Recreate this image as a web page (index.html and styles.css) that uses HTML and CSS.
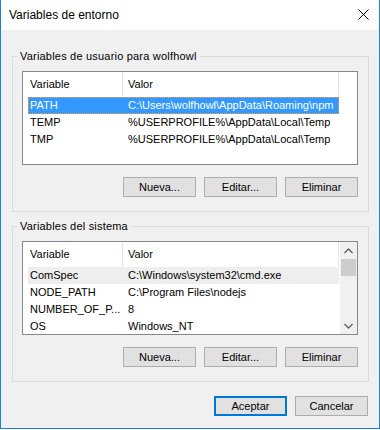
FILE: index.html
```html
<!DOCTYPE html>
<html>
<head>
    <title>Variables de entorno</title>
    <link rel="stylesheet" href="styles.css">
</head>
<body>
    <div class="window">
        <div class="titlebar">
            <span class="title">Variables de entorno</span>
            <svg class="close" width="11" height="11" viewBox="0 0 11 11">
                <path d="M0.5 0.5L10.5 10.5M10.5 0.5L0.5 10.5" stroke="#000" stroke-width="1" fill="none"/>
            </svg>
        </div>

        <div class="content">
            <fieldset class="group">
                <legend>Variables de usuario para wolfhowl</legend>
                <div class="list">
                    <div class="list-body">
                        <div class="list-head">
                            <div class="head-name">Variable</div>
                            <div class="head-value">Valor</div>
                        </div>
                        <div class="row selected">
                            <div class="cell-name">PATH</div>
                            <div class="cell-value">C:\Users\wolfhowl\AppData\Roaming\npm</div>
                        </div>
                        <div class="row">
                            <div class="cell-name">TEMP</div>
                            <div class="cell-value">%USERPROFILE%\AppData\Local\Temp</div>
                        </div>
                        <div class="row">
                            <div class="cell-name">TMP</div>
                            <div class="cell-value">%USERPROFILE%\AppData\Local\Temp</div>
                        </div>
                    </div>
                </div>
                <div class="actions">
                    <button class="btn">Nueva...</button>
                    <button class="btn">Editar...</button>
                    <button class="btn">Eliminar</button>
                </div>
            </fieldset>

            <fieldset class="group system">
                <legend>Variables del sistema</legend>
                <div class="list">
                    <div class="list-body">
                        <div class="list-head">
                            <div class="head-name">Variable</div>
                            <div class="head-value">Valor</div>
                        </div>
                        <div class="row inactive">
                            <div class="cell-name">ComSpec</div>
                            <div class="cell-value">C:\Windows\system32\cmd.exe</div>
                        </div>
                        <div class="row">
                            <div class="cell-name">NODE_PATH</div>
                            <div class="cell-value">C:\Program Files\nodejs</div>
                        </div>
                        <div class="row">
                            <div class="cell-name">NUMBER_OF_P...</div>
                            <div class="cell-value">8</div>
                        </div>
                        <div class="row">
                            <div class="cell-name">OS</div>
                            <div class="cell-value">Windows_NT</div>
                        </div>
                    </div>
                    <div class="scrollbar">
                        <div class="arrow">
                            <svg width="9" height="6" viewBox="0 0 9 6"><path d="M0.5 5L4.5 1L8.5 5" stroke="#606060" stroke-width="1.3" fill="none"/></svg>
                        </div>
                        <div class="track">
                            <div class="thumb"></div>
                        </div>
                        <div class="arrow">
                            <svg width="9" height="6" viewBox="0 0 9 6"><path d="M0.5 1L4.5 5L8.5 1" stroke="#606060" stroke-width="1.3" fill="none"/></svg>
                        </div>
                    </div>
                </div>
                <div class="actions">
                    <button class="btn">Nueva...</button>
                    <button class="btn">Editar...</button>
                    <button class="btn">Eliminar</button>
                </div>
            </fieldset>

            <div class="dialog-actions">
                <button class="btn btn-default">Aceptar</button>
                <button class="btn">Cancelar</button>
            </div>
        </div>
    </div>
</body>
</html>
```

FILE: styles.css
```css
* {
    box-sizing: border-box;
}

body {
    margin: 0;
    background-color: #ffffff;
    font-family: "Liberation Sans", Arial, sans-serif;
    font-size: 11px;
    color: #000000;
}

.window {
    width: 380px;
    height: 429px;
    border: 1px solid #1883d7;
    border-top: none;
    background-color: #f0f0f0;
}

.titlebar {
    height: 30px;
    background-color: #ffffff;
    display: flex;
    justify-content: space-between;
    padding: 0 10px 0 8px;
}

.title {
    font-size: 12px;
    line-height: 30px;
}

.close {
    margin-top: 9px;
}

.content {
    padding: 19px 10px 0 11px;
}

/* Group boxes */
.group {
    margin: 0;
    min-width: 0;
    padding: 8px 10px 14px 9px;
    border: 1px solid #dcdcdc;
}

.group legend {
    padding: 0 3px;
    margin-left: -5px;
    line-height: 14px;
    letter-spacing: 0.2px;
}

.system {
    margin-top: 7px;
}

/* List views */
.list {
    display: flex;
    height: 94px;
    border: 1px solid #828790;
    background-color: #ffffff;
}

.list-body {
    flex: 1;
    overflow: hidden;
}

.list-head {
    display: flex;
    height: 24px;
    line-height: 24px;
    margin-bottom: 1px;
}

.head-name {
    width: 100px;
    padding-left: 7px;
    border-right: 1px solid #e5e5e5;
}

.head-value {
    width: 216px;
    padding-left: 5px;
    border-right: 1px solid #e5e5e5;
}

.row {
    display: flex;
    width: 311px;
    height: 17px;
    line-height: 17px;
    margin-left: 5px;
    white-space: nowrap;
}

.cell-name {
    width: 95px;
    padding-left: 2px;
}

.cell-value {
    padding-left: 5px;
}

.row.selected {
    background-color: #3399ff;
    color: #ffffff;
    outline: 1px dotted #ff9a2e;
    outline-offset: -1px;
}

.row.inactive {
    background-color: #eeeeee;
}

/* Scrollbar */
.scrollbar {
    width: 17px;
    display: flex;
    flex-direction: column;
    background-color: #f0f0f0;
}

.arrow {
    height: 17px;
    display: flex;
    justify-content: center;
    align-items: center;
}

.track {
    flex: 1;
}

.thumb {
    height: 17px;
    margin: 0 1px;
    background-color: #cdcdcd;
}

/* Buttons */
.actions {
    display: flex;
    justify-content: flex-end;
    gap: 8px;
    margin-top: 12px;
}

.btn {
    width: 73px;
    height: 20px;
    padding: 0;
    border: 1px solid #adadad;
    background-color: #e1e1e1;
    font-family: inherit;
    font-size: 11px;
    color: #000000;
}

.btn-default {
    border: 2px solid #0078d7;
}

.dialog-actions {
    display: flex;
    justify-content: flex-end;
    gap: 8px;
    margin-top: 14px;
    padding-right: 1px;
}
```
